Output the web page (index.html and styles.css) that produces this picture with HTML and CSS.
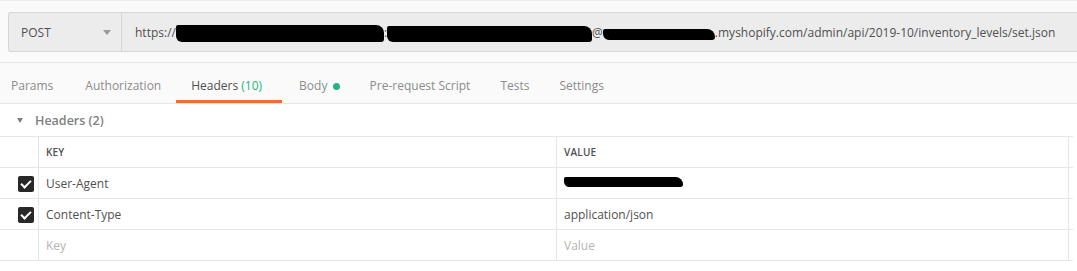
FILE: index.html
```html
<!DOCTYPE html>
<html lang="en">
  <head>
    <meta charset="UTF-8" />
    <meta name="viewport" content="width=device-width, initial-scale=1.0" />
    <title>Request</title>
    <link rel="stylesheet" href="styles.css">
  </head>
  <body>
    <div class="top">
      <div class="url-bar">
        <div class="method">
          <span>POST</span>
          <span class="caret"></span>
        </div>
        <div class="url">
          <span>https://</span><span class="blot blot-a"></span><span>:</span><span class="blot blot-b"></span><span>@</span><span class="blot blot-c"></span><span>.myshopify.com/admin/api/2019-10/inventory_levels/set.json</span>
        </div>
      </div>
    </div>

    <div class="tabs">
      <div class="tab">Params</div>
      <div class="tab">Authorization</div>
      <div class="tab active">Headers <span class="count">(10)</span></div>
      <div class="tab">Body <span class="dot"></span></div>
      <div class="tab">Pre-request Script</div>
      <div class="tab">Tests</div>
      <div class="tab">Settings</div>
    </div>

    <div class="section-title">
      <span class="tri"></span>
      <span>Headers (2)</span>
    </div>

    <table class="headers">
      <thead>
        <tr>
          <th class="check"></th>
          <th class="key">Key</th>
          <th class="value">Value</th>
          <th class="last"></th>
        </tr>
      </thead>
      <tbody>
        <tr>
          <td class="check"><span class="box"></span></td>
          <td>User-Agent</td>
          <td><span class="blot blot-d"></span></td>
          <td class="last"></td>
        </tr>
        <tr>
          <td class="check"><span class="box"></span></td>
          <td>Content-Type</td>
          <td>application/json</td>
          <td class="last"></td>
        </tr>
        <tr class="placeholder">
          <td class="check"></td>
          <td>Key</td>
          <td>Value</td>
          <td class="last"></td>
        </tr>
      </tbody>
    </table>
  </body>
</html>
```

FILE: styles.css
```css
body {
  margin: 0;
  background: #ffffff;
  color: #505050;
  font-family: "Open Sans", "Liberation Sans", sans-serif;
  font-size: 12px;
}
.top {
  background: #fafafa;
  border-top: 1px solid #ececec;
  padding: 11px 0 10px 8px;
  border-bottom: 1px solid #e6e6e6;
}
.url-bar {
  display: flex;
  height: 38px;
  background: #ececec;
  border: 1px solid #d6d6d6;
  border-right: none;
  border-radius: 3px 0 0 3px;
}
.method {
  width: 113px;
  display: flex;
  align-items: center;
  justify-content: space-between;
  padding: 0 10px 0 12px;
  box-sizing: border-box;
  border-right: 1px solid #d6d6d6;
  color: #505050;
}
.caret {
  width: 0;
  height: 0;
  border-left: 4px solid transparent;
  border-right: 4px solid transparent;
  border-top: 5px solid #9a9a9a;
}
.url {
  flex: 1;
  display: flex;
  align-items: center;
  padding-left: 13px;
  white-space: nowrap;
  color: #505050;
}
.blot {
  display: inline-block;
  background: #000000;
  border-radius: 2px 8px 3px 6px;
}
.blot-a {
  width: 208px;
  height: 17px;
  margin-top: 2px;
}
.blot-b {
  width: 205px;
  height: 16px;
  margin-top: 3px;
}
.blot-c {
  width: 112px;
  height: 11px;
  margin-top: 5px;
}
.blot-d {
  width: 119px;
  height: 10px;
  margin-top: -4px;
  vertical-align: middle;
}
.tabs {
  display: flex;
  background: #fafafa;
  padding-left: 11px;
  height: 40px;
  border-bottom: 1px solid #e6e6e6;
}
.tab {
  position: relative;
  margin-right: 30px;
  padding-top: 6px;
  line-height: 34px;
  font-size: 12px;
  color: #8c8c8c;
}
.tab:first-child {
  margin-right: 32px;
}
.tab.active {
  margin-right: 37px;
  color: #505050;
}
.tab.active::after {
  content: "";
  position: absolute;
  left: -15px;
  right: -20px;
  bottom: 0;
  height: 3px;
  background: #f26b3a;
}
.count {
  color: #26b47f;
}
.dot {
  display: inline-block;
  width: 7px;
  height: 7px;
  border-radius: 50%;
  background: #26b47f;
  margin-left: 2px;
}
.section-title {
  display: flex;
  align-items: center;
  height: 32px;
  padding-left: 17px;
  color: #808080;
  font-weight: 600;
  font-size: 12.5px;
}
.tri {
  width: 0;
  height: 0;
  border-left: 3px solid transparent;
  border-right: 3px solid transparent;
  border-top: 5px solid #808080;
  margin-right: 12px;
}
.headers {
  width: 1073px;
  border-collapse: collapse;
}
.headers th,
.headers td {
  border: 1px solid #e6e6e6;
  height: 30px;
  padding: 0 0 0 7px;
  text-align: left;
}
.headers tr > :first-child {
  border-left: none;
}
.headers th {
  font-size: 10px;
  font-weight: 600;
  text-transform: uppercase;
  color: #505050;
  letter-spacing: 0.2px;
}
.headers .check {
  width: 38px;
  padding: 0;
  text-align: right;
}
.headers .key {
  width: 510px;
}
.headers .last {
  width: 4px;
  padding: 0;
  border-right: none;
}
.box {
  display: inline-block;
  width: 16px;
  height: 16px;
  margin-right: 4px;
  border-radius: 2px;
  background: #282828;
  vertical-align: middle;
  position: relative;
}
.box::after {
  content: "";
  position: absolute;
  left: 5px;
  top: 2px;
  width: 4px;
  height: 8px;
  border: solid #ffffff;
  border-width: 0 2px 2px 0;
  transform: rotate(45deg);
}
.placeholder td {
  color: #b4b4b4;
}
```
